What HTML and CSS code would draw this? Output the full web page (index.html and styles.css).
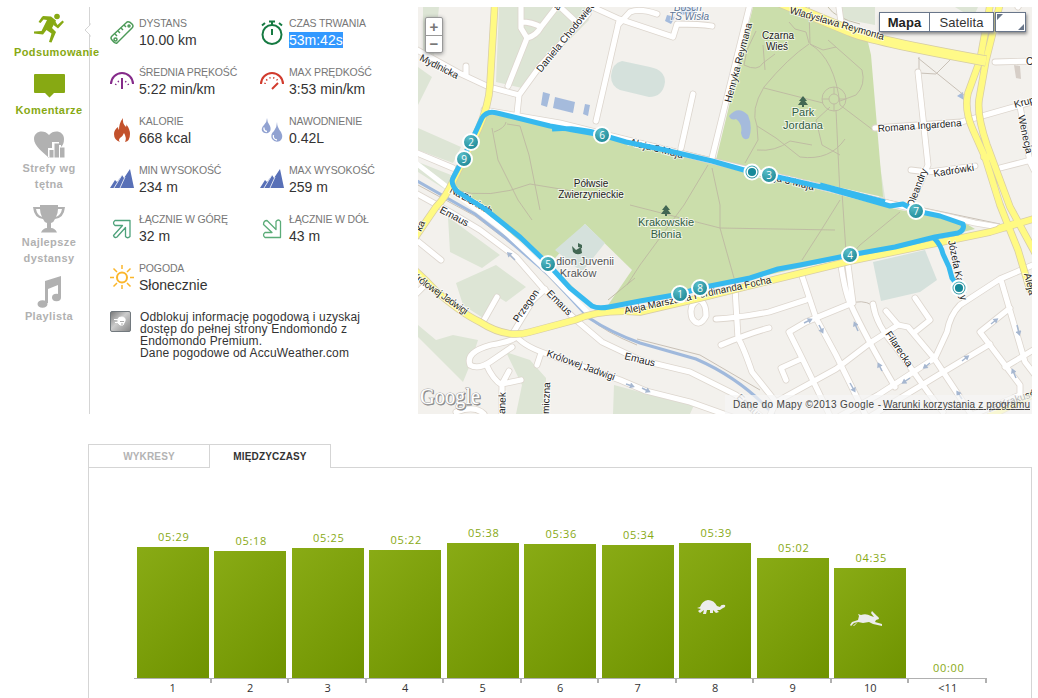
FILE: index.html
```html
<!DOCTYPE html>
<html lang="pl">
<head>
<meta charset="utf-8">
<title>Podsumowanie treningu</title>
<link rel="stylesheet" href="styles.css">
</head>
<body>
<main class="page">
<section class="summary">
  <nav class="side">
    <a class="nav-item active"><svg class="nav-icon" width="32" height="31" viewBox="0 0 32 31"><circle cx="24" cy="3.500" r="2.800"/><path d="M8.500 4.500L10 3L18 3.500L23 7.500L19 15L23 19L18.500 29.500L16 29L18.500 20.500L13.500 17L10 21.500L1 20.500V18.500L8.500 18L14 7L10.500 6.500L7.500 10L5.500 9Z"/><path d="M22 8L24.500 12L29.500 7.500L31 9L25 15.500L20.500 12Z"/></svg><span>Podsumowanie</span></a>
    <a class="nav-item active"><svg class="nav-icon" width="32" height="31" viewBox="0 0 32 31"><path d="M2 3Q1 3 1 4V21Q1 22 2 22H12L16.500 26.500L21 22H31Q32 22 32 21V4Q32 3 31 3Z"/></svg><span>Komentarze</span></a>
    <a class="nav-item"><svg class="nav-icon" width="32" height="31" viewBox="0 0 32 31"><path d="M16 29C10 23 1 17 1 10C1 2 11 0 16 6C21 0 31 2 31 10C31 14 30 16 28 18V16H26V13H19V19H15V29Z"/><path d="M16.500 21H20.500V28.500H16.500ZM21.500 14.500H26V28.500H21.500ZM27 18.500H31.500V28.500H27Z"/></svg><span>Strefy wg<br>tętna</span></a>
    <a class="nav-item"><svg class="nav-icon" width="32" height="31" viewBox="0 0 32 31"><path d="M7 2H25V4H32Q31 15 22 16Q21 19 18 20V25Q22 25 24 29.500H8Q10 25 14 25V20Q11 19 10 16Q1 15 0 4H7ZM3 6Q4 12 9 14Q7 10 7 6ZM29 6H25Q25 10 23 14Q28 12 29 6Z" fill-rule="evenodd"/></svg><span>Najlepsze<br>dystansy</span></a>
    <a class="nav-item"><svg class="nav-icon" width="32" height="33" viewBox="0 0 32 33"><path d="M12 6L28 1V22H25V10L15 14V28H12Z"/><ellipse cx="9.500" cy="29" rx="5" ry="3.800"/><ellipse cx="23.500" cy="22.500" rx="4.500" ry="3.700"/></svg><span>Playlista</span></a>
  </nav>
  <div class="details">
    <svg class="pointer" width="8" height="16" viewBox="0 0 8 16"><path d="M6 1V3L1 8L6 13V15" fill="#fff" stroke="#d5d5d5"/></svg>
    <div class="metrics">
      <div class="metric"><svg width="24" height="25" viewBox="0 0 24 25" fill="none" stroke="#4c9a58" stroke-width="1.500"><path d="M2 16L17 2Q19 1 22 4Q24 6 22 8L7 23Q5 24 2 20Q0 18 2 16Z"/><path d="M5 14l2 2M8 11l2 2M11 8l2 2M14 5l2 2"/><circle cx="5.500" cy="19.500" r="1.500"/><circle cx="19" cy="6" r="1"/></svg><div><h3>DYSTANS</h3><p>10.00 km</p></div></div>
      <div class="metric"><svg width="24" height="25" viewBox="0 0 24 25" fill="none" stroke="#167a42" stroke-width="2"><circle cx="12" cy="14.500" r="9.500"/><path d="M12 1V5M9 1.500H15M12 9V15"/><path d="M2 5.500L5 3M22 5.500L19 3"/></svg><div><h3>CZAS TRWANIA</h3><p><mark>53m:42s</mark></p></div></div>
      <div class="metric"><svg width="24" height="25" viewBox="0 0 24 25" fill="none" stroke="#852b8a" stroke-width="2"><path d="M1 16A11 11 0 0 1 23 16" transform="translate(0 -1)"/><path d="M12 9V20"/><path d="M5.500 16A7 7 0 0 1 18.500 16" stroke-dasharray="1.300 2.500" stroke-width="1.500"/></svg><div><h3>ŚREDNIA PRĘKOŚĆ</h3><p>5:22 min/km</p></div></div>
      <div class="metric"><svg width="24" height="25" viewBox="0 0 24 25" fill="none" stroke="#d13b2d" stroke-width="2"><path d="M1 15A11 11 0 0 1 23 15"/><path d="M12 20L18 14"/><path d="M5 15A7 7 0 0 1 18 12" stroke-dasharray="1.300 2.500" stroke-width="1.500"/></svg><div><h3>MAX PRĘDKOŚĆ</h3><p>3:53 min/km</p></div></div>
      <div class="metric"><svg width="24" height="25" viewBox="0 0 24 25" fill="#c3512b"><path d="M13 0Q12 5 16 9Q17 7 16 6Q20 11 20 16Q20 23 15 24Q17 20 14 15Q13 18 10 20Q8 22 10 24Q4 22 4 16Q4 12 8 9Q8 11 9 12Q9 5 13 0Z"/></svg><div><h3>KALORIE</h3><p>668 kcal</p></div></div>
      <div class="metric"><svg width="24" height="25" viewBox="0 0 24 25" fill="#91a2d1"><path d="M7 0Q7 4 10 8Q12 13 8 15Q4 16 2 13Q1 10 4 7Q7 4 7 0ZM17 4Q17 9 21 14Q24 20 20 23Q15 25 12 21Q10 16 14 13Q17 9 17 4Z"/><path d="M4 9.500Q3.500 13 7 13.500M13.500 17Q12.500 21 17 22" stroke="#fff" stroke-width="1.300" fill="none"/></svg><div><h3>NAWODNIENIE</h3><p>0.42L</p></div></div>
      <div class="metric"><svg width="24" height="25" viewBox="0 0 24 25" fill="#5870b7"><path d="M0 21L5 13L7 15L12 8L14 11L20 2L24 21Z"/><path d="M4 21L12 8M10 21L15 10" stroke="#fff" stroke-width=".8"/></svg><div><h3>MIN WYSOKOŚĆ</h3><p>234 m</p></div></div>
      <div class="metric"><svg width="24" height="25" viewBox="0 0 24 25" fill="#5870b7"><path d="M0 21L5 13L7 15L12 8L14 11L20 2L24 21Z"/><path d="M4 21L12 8M10 21L15 10" stroke="#fff" stroke-width=".8"/></svg><div><h3>MAX WYSOKOŚĆ</h3><p>259 m</p></div></div>
      <div class="metric"><svg width="24" height="25" viewBox="0 0 24 25" fill="none" stroke="#4ea27b" stroke-width="1.300"><path d="M5 4.500H20V20.500Q17.500 23 15.500 20.500V11.500L7 21Q4.500 22.500 3.500 19.500L12.500 9.500H5Q2 7 5 4.500Z" stroke-linejoin="round"/></svg><div><h3>ŁĄCZNIE W GÓRĘ</h3><p>32 m</p></div></div>
      <div class="metric"><svg width="24" height="25" viewBox="0 0 24 25" fill="none" stroke="#5bac78" stroke-width="1.300"><path d="M16 5.500Q18.500 2.500 20.500 5.500V21.500H5Q2 19 5 16.500H12L3.500 8.500Q3.500 4.500 7 4.500L16 13.500Z" stroke-linejoin="round"/></svg><div><h3>ŁĄCZNIE W DÓŁ</h3><p>43 m</p></div></div>
      <div class="metric"><svg width="24" height="25" viewBox="0 0 24 25" fill="none" stroke="#fbb62b"><circle cx="12" cy="12.500" r="5" stroke-width="2"/><path stroke-width="1.500" d="M12 0V4M12 20V24M0 12.500H4M20 12.500H24M3.500 3.500L7 7M17 18L20.500 21.500M3.500 21.500L7 18M17 7L20.500 3.500"/></svg><div><h3>POGODA</h3><p>Słonecznie</p></div></div>
    </div>
    <div class="premium">
      <svg width="21" height="21" viewBox="0 0 21 21"><defs><linearGradient id="silver" x2="1" y2="1"><stop stop-color="#777"/><stop offset=".45" stop-color="#ccc"/><stop offset="1" stop-color="#858585"/></linearGradient></defs><rect x=".5" y=".5" width="20" height="20" rx="1.500" fill="url(#silver)" stroke="#72797e"/><path d="M8 8Q8 6 12 6Q16 6.500 15 10L13 14H10L8 12ZM4 8.500H9M5 11.500H9" fill="#fff" stroke="#fff"/><path d="M10 10.500H14M11 13H13" stroke="#aaa"/></svg>
      <p>Odblokuj informację pogodową i uzyskaj<br>dostęp do pełnej strony Endomondo z<br>Endomondo Premium.<br>Dane pogodowe od AccuWeather.com</p>
    </div>
  </div>
  <div class="map">
    <svg width="614" height="407" viewBox="418 7 614 407">
      <defs>
        <radialGradient id="pin" cx=".35" cy=".25" r=".9"><stop stop-color="#57bcc7"/><stop offset="1" stop-color="#16808f"/></radialGradient>
        <g id="streets">
          <path d="M410 46L459 73L489 87L519 95L517 114M519 95L540 66L588 14M508 86L527 38L521 28V0M527 38Q536 36 541 27L558 5L574 20M466 66V75M521 22Q532 22 541 27M588 5L619 19L640 26L673 37L677 24Q700 24 712 26M618 25L630 12Q640 8 657 14M619 21L596 121M693 94L681 148M751 0L712 158"/>
          <path d="M484 110L560 123L712 161L830 189L905 207L950 217L975 223L1005 228M410 150L453 168M410 190L450 212L480 230L516 257L543 288L576 320L602 342L640 360L690 372L736 395L765 420M545 289L533 300L513 333M497 297L484 320M410 235L441 260M410 300L424 286"/>
          <path d="M517 337Q525 347 550 355L620 380L646 391L690 402L735 418M541 353L537 365M517 337Q510 342 491 345Q465 352 470 365Q478 370 490 362L512 347M486 364Q493 380 502 385V420M502 384L509 371M502 384L521 380M456 412Q475 405 484 414"/>
          <path d="M699 290V300Q688 304 692 318Q699 329 706 316Q706 302 699 300M735 288L738 338Q743 346 752 372L776 402L768 420M716 319Q738 318 769 312L806 300M721 345Q750 333 769 328M801 273L816 318L836 355L868 420M789 332L806 322L850 304M789 332L802 358L832 420M786 380L781 368L801 359M776 402L836 369L870 343L898 325"/>
          <path d="M841 265Q845 292 850 303Q865 336 895 387M848 265L853 303M873 304Q876 325 895 346L928 392L943 412M886 311L898 325L908 327L934 358L975 420M915 298L930 320L915 332M1040 262L1000 279L960 305Q950 315 947 332L935 358L878 395L840 416M871 416L945 371L990 344M1001 280L1025 362L1035 375M1010 308L980 332L1020 385V395L960 420M1005 367L1035 349"/>
          <path d="M918 72L928 165L910 207M875 128L961 122L1035 101M911 170L928 172L975 166M1000 168L1035 159M995 62L1035 61M1020 106L1030 162L1034 170M841 22L838 0M1018 7L1022 0"/>
        </g>
        <g id="main-roads">
          <path d="M495 0L490 85Q489 105 478 130L453 181Q446 197 436 207L412 242M410 266Q425 279 436 291Q461 313 480 322Q506 339 530 332L575 320Q600 309 640 312L700 298L850 261L990 232L1040 217"/>
          <path d="M991 0L980 60L968 93Q964 110 973 130L985 157L1000 205L1018 250L1030 290M1001 0L986 60L979 100Q977 116 987 145L1010 207L1040 262M984 157H990M1000 228L1017 223M990 416L1040 391"/>
        </g>
        <marker id="tip" markerUnits="userSpaceOnUse" markerWidth="6" markerHeight="6" refX="3" refY="3" orient="auto"><path d="M1 0L6 3L1 6Z" fill="#a6b7d0"/></marker>
      </defs>
      <rect x="418" y="7" width="614" height="407" fill="#f3f1ed"/>
      <path fill="#dde5d5" d="M423 7H439L434 55L423 50ZM499 7H585L589 20L522 88L496 82ZM418 67L432 77L418 105ZM418 128L461 147L453 163L418 150ZM418 162L451 175L446 190L418 172ZM841 7H875V25L838 18ZM955 7H978L973 18ZM448 217L500 255L482 268L450 252ZM456 283L496 265L526 287L506 302L498 297L486 320L463 305ZM418 325L436 340L453 335L478 340L470 365L463 382L418 337ZM506 352L530 360L546 378V414H516L522 385ZM614 385L670 400L694 405L690 414H613ZM880 165L886 204L879 202Z"/>
      <path fill="#cbdeab" d="M753 7H780L867 38L871 55L883 197L716 160ZM475 135L484 115L495 112L560 125L712 163L900 210L960 220L975 229L930 240L850 257L700 290L605 309L590 304L548 263L455 190L453 178Z"/>
      <path fill="#f0eeea" d="M585 224L632 270L606 308L592 306L550 264Z"/>
      <path fill="#d5e1dc" d="M585 224L605 243L582 272L555 250ZM873 262L925 250L937 280L920 292L881 301ZM622 61L650 67Q665 70 665 82Q663 97 649 97L620 90Q611 86 611 76Q612 63 622 61Z"/>
      <path fill="#a5bbdc" d="M543 92L550 94L547 107L541 105ZM555 97L575 102L573 113L553 108ZM585 104L590 105L588 116L583 114ZM667 15L675 17L671 24L665 21ZM682 7H697L695 13L680 15ZM729 116Q738 105 748 115Q753 127 749 138Q743 142 741 133Q743 124 736 119Q731 121 729 116ZM957 96L963 92L964 100Z"/>
      <path fill="#d6cec7" d="M1014 65L1020 66L1021 79L1016 78Z"/>
      <g fill="none" stroke="#bdb8a1" stroke-width=".9">
        <path d="M492 128L498 160L518 200L532 220M507 124L520 126L529 155L540 210M494 132Q505 128 506 122M453 190Q490 200 530 184L615 198M708 165L684 205L640 265L627 285M712 168L720 205V228L734 278M630 205L720 228L835 230M900 212L860 245L850 256M842 192L846 252M840 200L820 232L802 260M608 300L635 278"/>
        <path d="M809 7L810 44Q835 59 840 105M756 31L747 50L744 65Q758 72 763 63L775 54M763 45L765 70M809 44Q788 58 764 87Q750 110 757 126L758 140L745 163M764 88L823 103M757 126L776 138L800 157Q830 161 845 139M757 150Q775 152 790 141L812 145M810 44L823 50L836 47M789 22L795 29L806 32L809 43M828 7Q835 18 860 24M836 110L840 195M828 40L862 70Q866 85 856 95L840 101M830 107L816 120L822 145L840 155M840 105L873 130"/>
        <circle cx="834" cy="99" r="12"/><circle cx="834" cy="99" r="5"/><path d="M834 87V94M834 104V111M822 99H829M839 99H846"/>
      </g>
      <path d="M418 185L475 216L530 258L589 318Q605 332 637 345M484 109L560 121L712 158L900 203L1000 224M637 339L700 355L760 390M918 58L965 96M919 57V72M952 58L936 74L919 73M849 304Q862 299 872 305" fill="none" stroke="#c9c1b7"/>
      <path d="M410 177L475 214L506 238L549 275L589 318Q610 332 640 343L696 359Q742 379 775 416" fill="none" stroke="#a0b9dc" stroke-width="3"/>
      <path d="M412 160L447 187L500 227L548 272L590 315" fill="none" stroke="#fff" stroke-width="5"/>
      <use href="#streets" class="casing"/><use href="#streets" class="road"/>
      <use href="#main-roads" class="casing wide"/><use href="#main-roads" class="yellow"/>
      <path d="M775 0L850 31Q870 40 986 61" fill="none" stroke="#d6cda3" stroke-width="11"/><path d="M775 0L850 31Q870 40 986 61" fill="none" stroke="#fffa88" stroke-width="9.500"/>
      <g class="arrows"><path d="M515 260L509 254"/><path d="M626 384L632 386"/><path d="M642 388L648 391"/><path d="M804 323L810 320"/><path d="M819 325L822 331"/><path d="M858 331L855 324"/><path d="M882 371L879 365"/><path d="M850 383L854 390"/><path d="M910 378L904 382"/><path d="M930 363L925 367"/><path d="M962 361L967 357"/><path d="M991 324L996 320"/><path d="M1017 325L1019 333"/><path d="M1016 378L1013 371"/><path d="M962 399L958 393"/></g>
      <g class="street-label">
        <text transform="translate(419 60) rotate(27)" textLength="42">Mydlnicka</text>
        <text transform="translate(541 73) rotate(-51)" textLength="87">Daniela Chodowiec</text>
        <text transform="translate(731 103) rotate(-75)" textLength="82">Henryka Reymana</text>
        <text transform="translate(789 13) rotate(16)" textLength="98">Władysława Reymonta</text>
        <text transform="translate(878 132) rotate(-4)" textLength="84">Romana Ingardena</text>
        <text transform="translate(934 177) rotate(-9)" textLength="41">Kadrówki</text>
        <text transform="translate(1015 108) rotate(-15)">Krup</text>
        <text transform="translate(1018 116) rotate(78)">Wenecja</text>
        <text x="1026" y="65">Cz</text>
        <text transform="translate(913 208) rotate(-69)">Oleandry</text>
        <text transform="translate(629 145) rotate(14)" textLength="55">Aleja 3 Maja</text>
        <text transform="translate(760 177) rotate(14)" textLength="55">Aleja 3 Maja</text>
        <text transform="translate(449 192) rotate(29)" textLength="47">Na Błoniach</text>
        <text transform="translate(439 212) rotate(28)">Emaus</text>
        <text transform="translate(546 294) rotate(45)">Emaus</text>
        <text transform="translate(624 359) rotate(14)">Emaus</text>
        <text transform="translate(736 398) rotate(44)" fill="#888">Emaus</text>
        <text transform="translate(411 277) rotate(35)" textLength="66">Królowej Jadwigi</text>
        <text transform="translate(546 356) rotate(20)" textLength="72">Królowej Jadwigi</text>
        <text transform="translate(518 323) rotate(-55)">Przegon</text>
        <text transform="translate(505 414) rotate(-88)">anek</text>
        <text transform="translate(549 414) rotate(-88)">miczna</text>
        <text transform="translate(625 314) rotate(-12)" textLength="150">Aleja Marszałka Ferdinanda Focha</text>
        <text transform="translate(948 241) rotate(78)" textLength="61">Józefa Kałuży</text>
        <text transform="translate(885 334) rotate(56)">Filarecka</text>
        <text transform="translate(1024 274) rotate(76)">Aleja</text>
        <text transform="translate(421 232) rotate(-65)">ka</text>
        <text transform="translate(989 412) rotate(-19)">za Krakusów</text>
        <text transform="translate(558 11) rotate(-55)">a</text>
      </g>
      <g class="place-label" text-anchor="middle">
        <text x="778" y="39">Czarna</text><text x="777" y="50">Wieś</text>
        <text x="591" y="187">Półwsie</text><text x="591" y="198">Zwierzynieckie</text>
        <g class="park-label"><text x="803" y="116">Park</text><text x="803" y="129">Jordana</text><text x="666" y="226">Krakowskie</text><text x="666" y="238">Błonia</text></g>
        <g class="venue-label"><text x="585" y="265">dion Juvenii</text><text x="578" y="277">Kraków</text></g>
        <g class="club-label"><text x="688" y="11">Bosch</text><text x="689" y="20">TS Wisła</text></g>
      </g>
      <path d="M803 96L807 101H805L808 105H804V107H802V105H798L801 101H799ZM666 205L670 210H668L671 214H667V216H665V214H661L664 210H662ZM572 246L576 250L581 247L582 253Q577 256 573 252ZM578 243L582 245V248L578 247Z" fill="#426753"/>
      <path d="M751 172L712 161L678 153L665 150L626 142L602 135L550 126L497 113Q487 110 482 118L471 142L463 159L453 178Q450 184 458 192L485 209L520 237L548 264L570 288L592 306Q598 309 609 307L640 301L680 294L700 288L750 278L778 269L800 265L850 255L895 247L935 237L958 233Q965 230 963 224L940 216L916 211L903 204L890 206L830 189L769 175M934 238Q941 245 943 254L949 267L952 278L958 286M552 129Q575 127 600 134M820 185L858 195L885 202" fill="none" stroke="#36b9ef" stroke-width="5" stroke-linejoin="round"/>
      <g class="pins">
        <circle cx="471" cy="142" r="8"/><circle cx="464" cy="159" r="8"/><circle cx="602" cy="135" r="8"/><circle cx="769" cy="175" r="8"/><circle cx="916" cy="211" r="8"/><circle cx="548" cy="264" r="8"/><circle cx="680" cy="294" r="8"/><circle cx="700" cy="288" r="8"/><circle cx="850" cy="255" r="8"/>
        <text x="471" y="146">2</text><text x="464" y="163">9</text><text x="602" y="139">6</text><text x="769" y="179">3</text><text x="916" y="215">7</text><text x="548" y="268">5</text><text x="680" y="298">1</text><text x="700" y="292">8</text><text x="850" y="259">4</text>
        <circle cx="752" cy="172" r="7.500"/><circle cx="959" cy="288" r="7.500"/><circle cx="752" cy="172" r="4.800" class="ring"/><circle cx="959" cy="288" r="4.800" class="ring"/>
      </g>
      <rect x="725" y="395" width="307" height="19" fill="#f5f5f5" opacity=".7"/>
      <text x="421" y="405" class="google shade" textLength="60" lengthAdjust="spacingAndGlyphs">Google</text>
      <text x="420" y="404" class="google" textLength="60" lengthAdjust="spacingAndGlyphs" aria-hidden="true">Google</text>
      <text x="733" y="408" class="credit" textLength="148">Dane do Mapy ©2013 Google -</text>
      <text x="883" y="408" class="credit link" textLength="147">Warunki korzystania z programu</text>
    </svg>
    <div class="zoomer"><b>+</b><b>−</b></div>
    <div class="map-type"><b>Mapa</b><span>Satelita</span></div>
    <div class="overview"><svg width="29" height="18" viewBox="0 0 29 18" fill="#69768a"><path d="M1 1H7L1 7ZM28 17H22L28 11Z"/></svg></div>
  </div>
</section>
<section class="splits">
  <div class="tabs"><span class="tab">WYKRESY</span><span class="tab current">MIĘDZYCZASY</span><span class="tab-rest"></span></div>
  <div class="chart">
    <div class="plot">
      <div class="slot"><span>05:29</span><div class="bar" style="height:131px"></div></div>
      <div class="slot"><span>05:18</span><div class="bar" style="height:127px"></div></div>
      <div class="slot"><span>05:25</span><div class="bar" style="height:130px"></div></div>
      <div class="slot"><span>05:22</span><div class="bar" style="height:128px"></div></div>
      <div class="slot"><span>05:38</span><div class="bar" style="height:135px"></div></div>
      <div class="slot"><span>05:36</span><div class="bar" style="height:134px"></div></div>
      <div class="slot"><span>05:34</span><div class="bar" style="height:133px"></div></div>
      <div class="slot"><span>05:39</span><div class="bar" style="height:135px"><svg width="34" height="16" viewBox="0 0 34 16" fill="#ececec"><path d="M3 9L6 8Q8 2 14 1Q20 1 23 7L26 8Q27 5 31 6Q32 8 29 9L26 11H23L25 13L22 14L19 11V14H16V11H13L12 15H9L10 11L6 14L4 12L7 10Z"/></svg></div></div>
      <div class="slot"><span>05:02</span><div class="bar" style="height:120px"></div></div>
      <div class="slot"><span>04:35</span><div class="bar" style="height:110px"><svg width="34" height="16" viewBox="0 0 34 16" fill="#ececec"><path d="M1 14L3 11L9 9L10 5L9 3L12 4Q17 2 22 5L25 6L22 2L23 0L28 5Q30 6 30 8L27 9L26 11L33 13V15L24 13L20 11L14 12L9 11L5 12L2 15ZM6 13L9 11L5 15L4 15Z"/></svg></div></div>
      <div class="slot"><span>00:00</span><div class="bar" style="height:0"></div></div>
    </div>
    <div class="axis"><span>1</span><span>2</span><span>3</span><span>4</span><span>5</span><span>6</span><span>7</span><span>8</span><span>9</span><span>10</span><span>&lt;11</span></div>
  </div>
</section>
</main>
</body>
</html>
```
FILE: styles.css
```css
* { box-sizing: border-box; }
body { margin: 0; background: #fff; font-family: "Liberation Sans", Arial, sans-serif; color: #333; }
h3, p { margin: 0; font-weight: normal; }
.page { width: 1038px; height: 698px; padding-top: 7px; overflow: hidden; }
.summary { display: flex; height: 407px; }
.side { width: 89px; padding: 6px 0 0 14px; display: flex; flex-direction: column; }
.nav-item { display: flex; flex-direction: column; align-items: center; width: 70px; text-align: center; color: #b1b1b1; fill: currentColor; font-size: 11px; font-weight: bold; line-height: 16px; letter-spacing: .4px; z-index: 1; margin-bottom: 11px; }
.nav-item span { white-space: nowrap; }
.nav-item:first-child span { align-self: flex-start; }
.nav-item:nth-child(3) { margin-bottom: 11px; }
.nav-item:nth-child(4) { margin-bottom: 9px; }
.nav-item.active { color: #87a913; }
.details { position: relative; width: 329px; border-left: 1px solid #d5d5d5; padding: 8px 0 0 20px; }
.pointer { position: absolute; left: -6px; top: 15px; }
.metrics { display: grid; grid-template-columns: 150px 150px; grid-auto-rows: 49px; }
.metric { display: flex; gap: 5px; white-space: nowrap; }
.metric > svg { margin-top: 5px; flex: none; }
.metric h3 { font-size: 10.5px; line-height: 16px; color: #777; letter-spacing: -.15px; }
.metric p { margin-top: 1px; font-size: 14px; line-height: 17px; }
.metric mark { display: inline-block; height: 16px; line-height: 17px; color: #fff; background: #39f; }
.premium { display: flex; gap: 9px; margin-top: 2px; }
.premium p { font-size: 12px; line-height: 12px; letter-spacing: .16px; white-space: nowrap; }
.map { position: relative; width: 614px; height: 407px; overflow: hidden; }
.map svg { display: block; }
.casing { fill: none; stroke: #ddd6ce; stroke-width: 6.8; stroke-linecap: round; stroke-linejoin: round; }
.casing.wide { stroke: #d8cda6; stroke-width: 7.5; }
.road { fill: none; stroke: #fff; stroke-width: 5.2; stroke-linecap: round; stroke-linejoin: round; }
.yellow { fill: none; stroke: #fffa83; stroke-width: 6; stroke-linecap: round; }
.arrows { fill: none; stroke: #a6b7d0; stroke-width: 1.5; }
.arrows path { marker-end: url(#tip); }
.arrows + .street-label, .place-label { stroke: #fff; stroke-opacity: .7; stroke-width: 2px; paint-order: stroke; }
.street-label { font-size: 10px; fill: #222; }
.place-label { font-size: 10px; fill: #222; }
.park-label { fill: #315d43; font-size: 11px; }
.venue-label { fill: #555; font-size: 11px; }
.club-label { fill: #5d7696; font-style: italic; font-size: 10px; }
.pins circle { fill: url(#pin); stroke: #fff; stroke-width: 2; }
.pins circle.ring { fill: #178999; stroke: #fff; stroke-width: 1.5; }
.pins text { fill: #fff; font: 10px "Open Sans", sans-serif; text-anchor: middle; }
.google { font: 24px "Liberation Serif", serif; fill: #fff; stroke: #aaa; stroke-width: 1; paint-order: stroke; }
.google.shade { fill: #888; stroke: #888; stroke-width: .8; }
.credit { font-size: 10px; fill: #444; }
.credit.link { text-decoration: underline; }
.zoomer { position: absolute; left: 7px; top: 10px; width: 18px; height: 36px; background: #fff; border: 1px solid #999; border-radius: 2px; box-shadow: 0 1px 4px #888; }
.zoomer b { display: block; height: 17px; font-size: 15px; line-height: 17px; text-align: center; color: #777; }
.zoomer b + b { border-top: 1px solid #999; line-height: 16px; }
.map-type { position: absolute; left: 461px; top: 5px; width: 115px; height: 20px; display: flex; background: #fff; border: 1px solid #69768a; box-shadow: 1px 2px 3px #888; font-size: 13px; line-height: 19px; text-align: center; letter-spacing: .1px; }
.map-type b { width: 50px; border-right: 1px solid #69768a; color: #222; }
.map-type span { flex: 1; }
.overview { position: absolute; left: 577px; top: 5px; width: 31px; height: 20px; border: 1px solid #69768a; box-shadow: 1px 2px 3px #888; background: #fff; }
.splits { margin: 30px 6px 0 88px; }
.tabs { display: flex; height: 24px; }
.tab { width: 122px; border: 1px solid #d5d5d5; font-size: 10px; font-weight: bold; line-height: 23px; text-align: center; color: #b3b3b3; letter-spacing: .15px; }
.tab.current { width: 121px; border-left: 0; border-bottom: 0; color: #333; }
.tab-rest { flex: 1; border-bottom: 1px solid #d5d5d5; }
.chart { height: 240px; border: solid #d5d5d5; border-width: 0 1px; padding: 0 45px; }
.plot { display: grid; grid-template-columns: repeat(11, 77.5px); height: 211px; width: 852.5px; border-bottom: 1px solid #b0b0b0; }
.slot { display: flex; flex-direction: column; justify-content: flex-end; padding-left: 2.8px; width: 74.8px; color: #87a913; font: 11px/16px "Open Sans", sans-serif; letter-spacing: .7px; text-align: center; }
.slot span { margin-bottom: 2px; padding-left: 2px; }
.bar { flex: none; display: flex; align-items: center; justify-content: center; background: linear-gradient(135deg, #89ab15, #6f9300); }
.bar svg { margin-right: 8px; margin-top: -8px; }
.axis { display: grid; grid-template-columns: repeat(11, 77.5px); font: 11px/18px "Open Sans", sans-serif; text-align: center; color: #333; }
.axis span { height: 4px; padding-left: 2px; border-right: 2px solid #b0b0b0; }
```
